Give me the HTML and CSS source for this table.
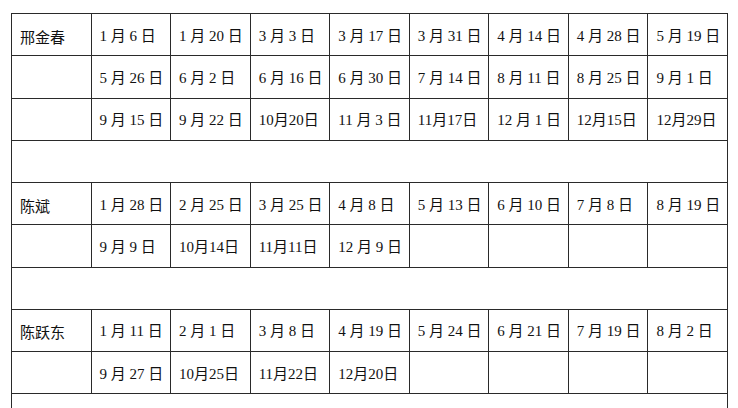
FILE: index.html
```html
<!DOCTYPE html>
<html lang="zh">
<head>
<meta charset="utf-8">
<link rel="stylesheet" href="styles.css">
</head>
<body>
<div class="page">
<table class="schedule">
<tbody>
<tr><td class="name">邢金春</td><td>1 月 6 日</td><td>1 月 20 日</td><td>3 月 3 日</td><td>3 月 17 日</td><td>3 月 31 日</td><td>4 月 14 日</td><td>4 月 28 日</td><td>5 月 19 日</td></tr>
<tr><td></td><td>5 月 26 日</td><td>6 月 2 日</td><td>6 月 16 日</td><td>6 月 30 日</td><td>7 月 14 日</td><td>8 月 11 日</td><td>8 月 25 日</td><td>9 月 1 日</td></tr>
<tr><td></td><td>9 月 15 日</td><td>9 月 22 日</td><td>10月20日</td><td>11 月 3 日</td><td>11月17日</td><td>12 月 1 日</td><td>12月15日</td><td>12月29日</td></tr>
<tr><td class="gap" colspan="9"></td></tr>
<tr><td class="name">陈斌</td><td>1 月 28 日</td><td>2 月 25 日</td><td>3 月 25 日</td><td>4 月 8 日</td><td>5 月 13 日</td><td>6 月 10 日</td><td>7 月 8 日</td><td>8 月 19 日</td></tr>
<tr><td></td><td>9 月 9 日</td><td>10月14日</td><td>11月11日</td><td>12 月 9 日</td><td></td><td></td><td></td><td></td></tr>
<tr><td class="gap" colspan="9"></td></tr>
<tr><td class="name">陈跃东</td><td>1 月 11 日</td><td>2 月 1 日</td><td>3 月 8 日</td><td>4 月 19 日</td><td>5 月 24 日</td><td>6 月 21 日</td><td>7 月 19 日</td><td>8 月 2 日</td></tr>
<tr><td></td><td>9 月 27 日</td><td>10月25日</td><td>11月22日</td><td>12月20日</td><td></td><td></td><td></td><td></td></tr>
<tr><td class="gap" colspan="9"></td></tr>
</tbody>
</table>
</div>
</body>
</html>
```

FILE: styles.css
```css
html, body {
  margin: 0;
  padding: 0;
  background: #ffffff;
}

.page {
  padding: 13px 0 0 11px;
  height: 408px;
  overflow: hidden;
  box-sizing: border-box;
}

.schedule {
  border-collapse: collapse;
  table-layout: fixed;
  width: 717px;
  font-family: "Liberation Serif", "Noto Sans CJK SC", serif;
  font-size: 15px;
  color: #111111;
}

.schedule td {
  border: 1px solid #2a2a2a;
  height: 38.25px;
  padding: 3px 0 0 8px;
  vertical-align: middle;
  white-space: nowrap;
  overflow: hidden;
  line-height: 1;
}

.schedule td.name {
  font-family: "Noto Sans CJK SC", sans-serif;
}
```
